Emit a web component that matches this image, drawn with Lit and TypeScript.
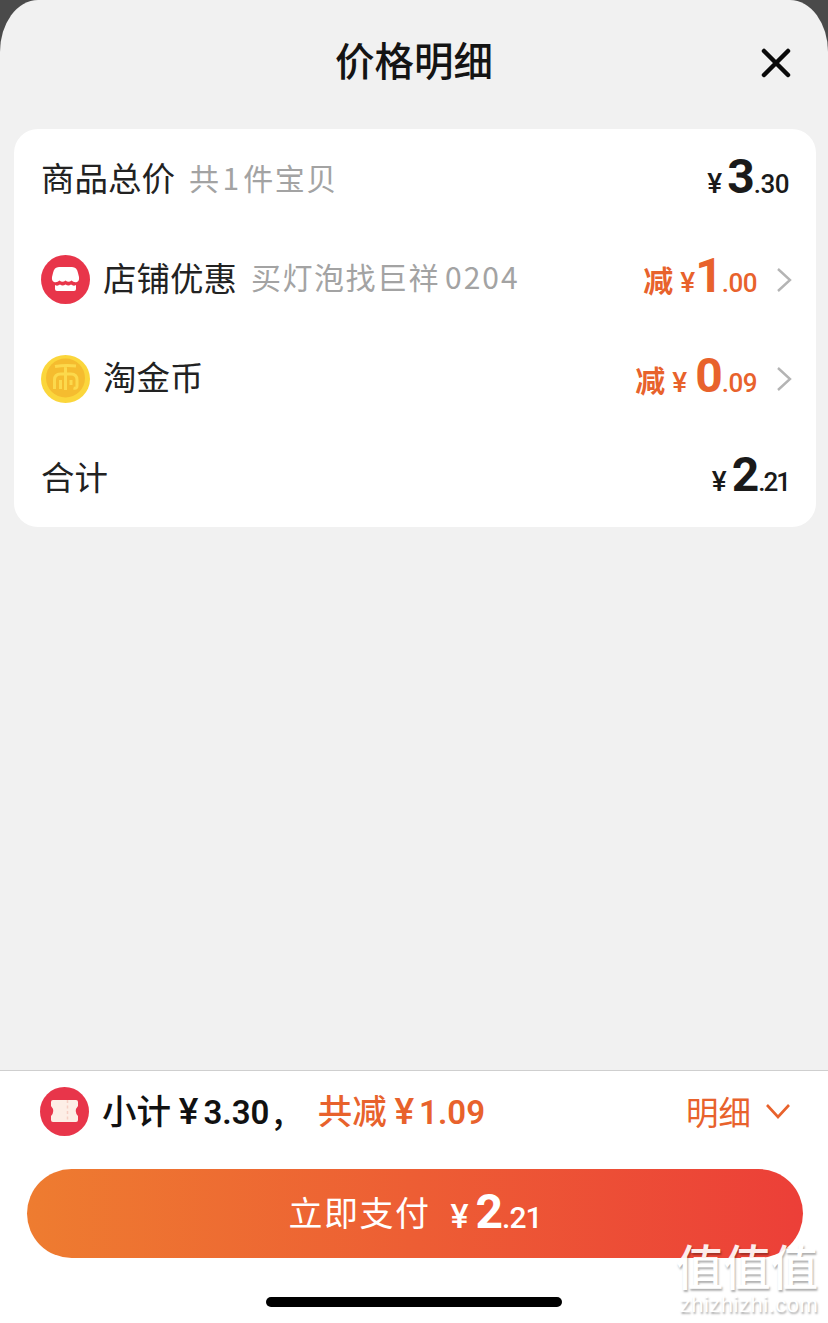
import { LitElement, html, css } from 'lit';
import { customElement } from 'lit/decorators.js';

const price = (int: string, dec: string, fit = '') => html`
  <span class="yen ${fit}">¥</span><span class="int">${int}</span><span class="dec">.${dec}</span>
`;

const chevron = html`
  <svg class="chevron" viewBox="0 0 16 26" width="16" height="26">
    <path d="M2 2 L14 13 L2 24" fill="none" stroke="#b4b4b4" stroke-width="2.4" />
  </svg>
`;

@customElement('app-root')
export class AppRoot extends LitElement {
  static styles = css`
    :host {
      display: block;
      width: 828px;
      height: 1323px;
      background: #4a4a4a;
      font-family: 'Noto Sans CJK SC', 'Noto Sans', sans-serif;
      overflow: hidden;
    }
    .sheet {
      position: relative;
      height: 100%;
      display: flex;
      flex-direction: column;
      background: #f1f1f1;
      border-radius: 38px 38px 0 0 / 52px 52px 0 0;
      overflow: hidden;
    }
    .header {
      height: 129px;
      flex: none;
      display: flex;
      align-items: center;
      justify-content: center;
      padding-bottom: 11px;
      box-sizing: border-box;
      position: relative;
    }
    .title {
      font-size: 39.5px;
      font-weight: 500;
      color: #141414;
      line-height: 1;
    }
    .close {
      position: absolute;
      left: 761px;
      top: 48px;
    }
    .card {
      margin: 0 12px 0 14px;
      background: #fff;
      border-radius: 24px;
      display: flex;
      flex-direction: column;
      flex: none;
    }
    .row {
      height: 99.5px;
      display: flex;
      align-items: center;
      padding: 0 24px 4px 27px;
      box-sizing: border-box;
    }
    .row.flush {
      padding-right: 27px;
    }
    .row.total .dec {
      letter-spacing: -2px;
    }
    .row .icon {
      width: 49px;
      height: 49px;
      margin: 6px 13px 0 0;
      flex: none;
    }
    .label {
      font-size: 33.5px;
      color: #222;
      line-height: 1;
    }
    .note {
      font-size: 30px;
      color: #a3a3a3;
      margin-left: 14px;
      line-height: 1;
      letter-spacing: 1.5px;
    }
    .digits {
      letter-spacing: 2px;
      margin: 0 5px;
    }
    .digits.one {
      margin: 0 2px;
    }
    .amount {
      margin-left: auto;
      display: flex;
      align-items: baseline;
      color: #1a1a1a;
      font-family: 'Roboto', 'Noto Sans', sans-serif;
      line-height: 1;
      font-weight: 500;
    }
    .amount.off {
      color: #e8622c;
    }
    .cut {
      font-family: 'Noto Sans CJK SC', sans-serif;
      font-size: 30px;
      font-weight: 700;
      margin-right: 7px;
    }
    .yen {
      font-size: 28px;
      margin-right: 5px;
    }
    .yen.tight {
      margin-right: 0;
    }
    .yen.wide {
      margin-right: 8px;
    }
    .int {
      font-size: 48px;
      font-weight: 700;
      letter-spacing: -1px;
    }
    .dec {
      font-size: 26px;
      letter-spacing: -0.5px;
    }
    .chevron {
      margin: 7px 0 0 19px;
      flex: none;
    }
    .spacer {
      flex: 1;
    }
    .footer {
      flex: none;
      height: 253px;
      background: #fff;
      border-top: 1px solid #cfcfcf;
      box-sizing: border-box;
      display: flex;
      flex-direction: column;
    }
    .summary {
      height: 98px;
      flex: none;
      display: flex;
      align-items: center;
      padding: 0 37px 18px 40px;
      box-sizing: border-box;
    }
    .summary .icon {
      width: 49px;
      height: 49px;
      margin-right: 13px;
    }
    .sub {
      font-size: 34.5px;
      font-weight: 500;
      color: #111;
      line-height: 1;
    }
    .sub.off {
      color: #e8622c;
      margin-left: 34px;
    }
    .num {
      font-family: 'Roboto', sans-serif;
      font-weight: 600;
      font-size: 33px;
      letter-spacing: 0;
    }
    .cur {
      font-family: 'Roboto', sans-serif;
      font-weight: 500;
      font-size: 37px;
      margin-right: 5px;
    }
    .comma {
      margin-left: 4px;
    }
    .detail {
      margin-left: auto;
      display: flex;
      align-items: center;
      gap: 14px;
      font-size: 32.5px;
      color: #e8622c;
      line-height: 1;
    }
    .pay {
      flex: none;
      margin: 0 25px 0 27px;
      height: 89px;
      border-radius: 45px;
      background: linear-gradient(90deg, #ee7c30, #ec3f38);
      display: flex;
      align-items: center;
      justify-content: center;
      color: #fff;
      padding-bottom: 4px;
      box-sizing: border-box;
    }
    .pay .go {
      font-size: 34px;
      line-height: 1;
      margin-right: 20px;
      letter-spacing: 1.5px;
    }
    .pay .amount {
      margin-left: 0;
      color: #fff;
    }
    .pay .yen {
      font-size: 34px;
      margin-right: 7px;
    }
    .pay .dec {
      font-size: 30px;
      letter-spacing: -1px;
    }
    .home {
      width: 296px;
      height: 10px;
      border-radius: 5px;
      background: #000;
      margin: 39px auto 0;
      flex: none;
    }
    .mark {
      position: absolute;
      left: 672px;
      top: 1240px;
      width: 150px;
      display: flex;
      flex-direction: column;
      align-items: center;
      color: #fff;
      text-shadow: 1px 2px 2px rgba(0, 0, 0, 0.35);
      opacity: 0.9;
    }
    .mark .big {
      font-size: 47.5px;
      line-height: 50px;
      font-weight: 500;
    }
    .mark .small {
      font-family: 'Liberation Sans', sans-serif;
      font-size: 22px;
      line-height: 24px;
      letter-spacing: 0.5px;
      margin: 3px 0 0 4px;
    }
  `;

  render() {
    return html`
      <div class="sheet">
        <div class="header">
          <span class="title">价格明细</span>
          <svg class="close" width="30" height="30" viewBox="0 0 30 30">
            <path d="M3 3 L27 27 M27 3 L3 27" stroke="#0a0a0a" stroke-width="4.500" stroke-linecap="round" />
          </svg>
        </div>
        <div class="card">
          <div class="row flush">
            <span class="label">商品总价</span>
            <span class="note">共<span class="digits one">1</span>件宝贝</span>
            <span class="amount">${price('3', '30')}</span>
          </div>
          <div class="row">
            <svg class="icon" viewBox="0 0 49 49">
              <circle cx="24.500" cy="24.500" r="24.500" fill="#e8354a" />
              <path d="M18 12 H31 Q36 12 37 18 L38 22 Q38.500 26 36 27 Q33 28 30.500 25.500 Q27.500 28 24.500 25.500 Q21.500 28 18.500 25.500 Q16 28 13 27 Q10.500 26 11 22 L12 18 Q13 12 18 12 Z" fill="#fff" />
              <path d="M14 30 Q16.500 31.500 19 29.500 Q21.500 31.500 24.500 29.500 Q27.500 31.500 30 29.500 Q32.500 31.500 35 30 V34 Q35 36 33 36 H16 Q14 36 14 34 Z" fill="#fff" />
            </svg>
            <span class="label">店铺优惠</span>
            <span class="note">买灯泡找巨祥<span class="digits">0204</span></span>
            <span class="amount off"><span class="cut">减</span>${price('1', '00', 'tight')}</span>
            ${chevron}
          </div>
          <div class="row">
            <svg class="icon" viewBox="0 0 49 49">
              <ellipse cx="24.500" cy="25" rx="24.500" ry="24" fill="#fbd63c" />
              <circle cx="24.500" cy="24" r="19.500" fill="#f5bc2f" />
              <path d="M14 12.500 Q24 11 35 12 M24.500 12 V36 M13.500 35 V26 Q13.500 20 19.500 20 H30 Q36 20 36 26 V32 Q36 35 32.500 34 M19.500 26 V35 M30 26 V31" fill="none" stroke="#fcd94c" stroke-width="3" />
            </svg>
            <span class="label">淘金币</span>
            <span class="amount off"><span class="cut">减</span>${price('0', '09', 'wide')}</span>
            ${chevron}
          </div>
          <div class="row flush total">
            <span class="label">合计</span>
            <span class="amount">${price('2', '21')}</span>
          </div>
        </div>
        <div class="spacer"></div>
        <div class="footer">
          <div class="summary">
            <svg class="icon" viewBox="0 0 49 49">
              <circle cx="24.500" cy="24.500" r="24.500" fill="#e8354a" />
              <path d="M13 13 H36 Q38 13 38 15 V19 Q33.500 24 38 29 V33 Q38 35 36 35 H13 Q11 35 11 33 V29 Q15.500 24 11 19 V15 Q11 13 13 13 Z" fill="#fdeee6" />
              <path d="M27.500 13 V35" stroke="#f6cfc4" stroke-width="1.500" stroke-dasharray="3 2.500" />
            </svg>
            <span class="sub">小计 <span class="cur">¥</span><span class="num">3.30</span><span class="comma">,</span></span>
            <span class="sub off">共减 <span class="cur">¥</span><span class="num">1.09</span></span>
            <span class="detail">
              明细
              <svg width="26" height="16" viewBox="0 0 26 16">
                <path d="M2 2 L13 14 L24 2" fill="none" stroke="#e8622c" stroke-width="2.600" />
              </svg>
            </span>
          </div>
          <div class="pay">
            <span class="go">立即支付</span>
            <span class="amount">${price('2', '21')}</span>
          </div>
          <div class="home"></div>
        </div>
        <div class="mark">
          <span class="big">值值值</span>
          <span class="small">zhizhizhi.com</span>
        </div>
      </div>
    `;
  }
}
